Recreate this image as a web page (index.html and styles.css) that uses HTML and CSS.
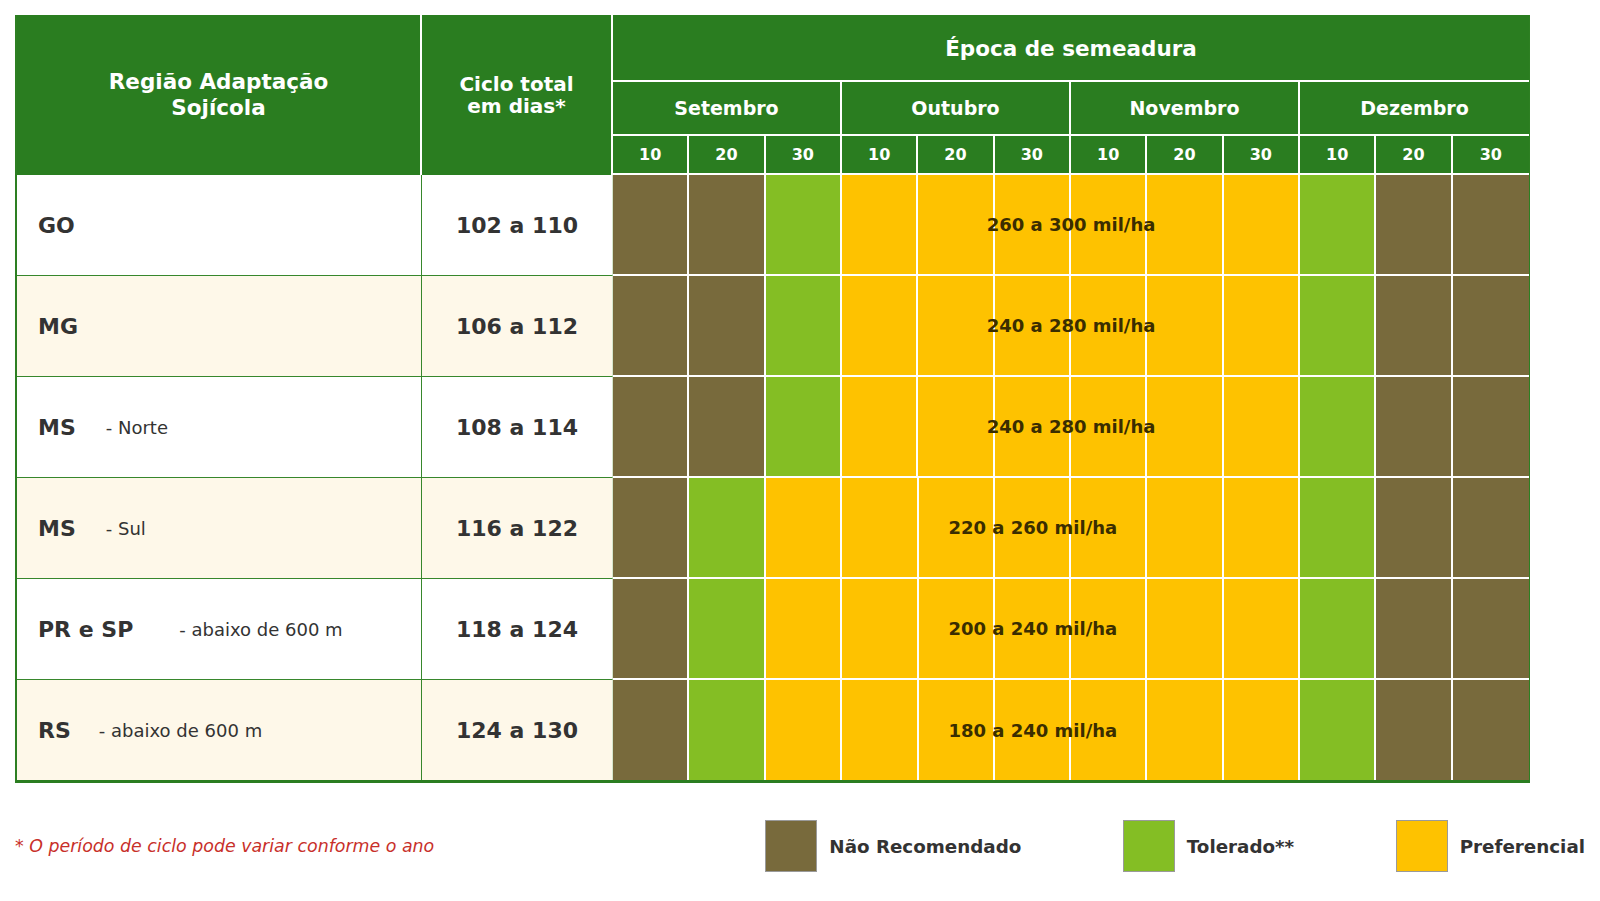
FILE: index.html
```html
<!DOCTYPE html>
<html lang="pt-BR">
<head>
<meta charset="utf-8">
<title>Época de semeadura</title>
<link rel="stylesheet" href="styles.css">
</head>
<body>
<div class="page">
  <div class="chart">
    <div class="grid head">
      <div class="h h-region">Região Adaptação<br>Sojícola</div>
      <div class="h h-cycle">Ciclo total<br>em dias*</div>
      <div class="h h-epoca end">Época de semeadura</div>
      <div class="h h-month">Setembro</div>
      <div class="h h-month">Outubro</div>
      <div class="h h-month">Novembro</div>
      <div class="h h-month end">Dezembro</div>
      <div class="h h-day">10</div><div class="h h-day">20</div><div class="h h-day">30</div>
      <div class="h h-day">10</div><div class="h h-day">20</div><div class="h h-day">30</div>
      <div class="h h-day">10</div><div class="h h-day">20</div><div class="h h-day">30</div>
      <div class="h h-day">10</div><div class="h h-day">20</div><div class="h h-day end">30</div>
    </div>

    <div class="grid row">
      <div class="region">GO</div>
      <div class="cycle">102 a 110</div>
      <div class="c b"></div><div class="c b"></div><div class="c g"></div>
      <div class="c y span6">260 a 300 mil/ha</div>
      <div class="c g"></div><div class="c b"></div><div class="c b end"></div>
    </div>

    <div class="grid row alt">
      <div class="region">MG</div>
      <div class="cycle">106 a 112</div>
      <div class="c b"></div><div class="c b"></div><div class="c g"></div>
      <div class="c y span6">240 a 280 mil/ha</div>
      <div class="c g"></div><div class="c b"></div><div class="c b end"></div>
    </div>

    <div class="grid row">
      <div class="region">MS<span class="sub">- Norte</span></div>
      <div class="cycle">108 a 114</div>
      <div class="c b"></div><div class="c b"></div><div class="c g"></div>
      <div class="c y span6">240 a 280 mil/ha</div>
      <div class="c g"></div><div class="c b"></div><div class="c b end"></div>
    </div>

    <div class="grid row alt">
      <div class="region">MS<span class="sub">- Sul</span></div>
      <div class="cycle">116 a 122</div>
      <div class="c b"></div><div class="c g"></div>
      <div class="c y span7">220 a 260 mil/ha</div>
      <div class="c g"></div><div class="c b"></div><div class="c b end"></div>
    </div>

    <div class="grid row">
      <div class="region">PR e SP<span class="sub wide">- abaixo de 600 m</span></div>
      <div class="cycle">118 a 124</div>
      <div class="c b"></div><div class="c g"></div>
      <div class="c y span7">200 a 240 mil/ha</div>
      <div class="c g"></div><div class="c b"></div><div class="c b end"></div>
    </div>

    <div class="grid row alt last">
      <div class="region">RS<span class="sub narrow">- abaixo de 600 m</span></div>
      <div class="cycle">124 a 130</div>
      <div class="c b"></div><div class="c g"></div>
      <div class="c y span7">180 a 240 mil/ha</div>
      <div class="c g"></div><div class="c b"></div><div class="c b end"></div>
    </div>
  </div>

  <div class="footer">
    <div class="note">* O período de ciclo pode variar conforme o ano</div>
    <div class="legend">
      <div class="item"><span class="sw b"></span>Não Recomendado</div>
      <div class="item"><span class="sw g"></span>Tolerado**</div>
      <div class="item"><span class="sw y"></span>Preferencial</div>
    </div>
  </div>
</div>
</body>
</html>
```

FILE: styles.css
```css
* { box-sizing: border-box; }

body {
  margin: 0;
  background: #ffffff;
  font-family: "DejaVu Sans", "Noto Sans", sans-serif;
  color: #333333;
}

.page {
  padding: 15px 15px 0 15px;
}

.chart {
  width: 1515px;
  border-left: 2px solid #2d7f22;
  border-right: 1px solid #2d7f22;
  border-bottom: 3px solid #2a7d20;
}

.grid {
  display: grid;
  grid-template-columns: 405px 191px repeat(12, 1fr);
}

/* ---------- header ---------- */
.head {
  grid-template-rows: 67px 54px 39px;
  background: #2a7d20;
  color: #ffffff;
  font-weight: bold;
}

.h {
  display: flex;
  align-items: center;
  justify-content: center;
  text-align: center;
  border-right: 2px solid #ffffff;
  border-bottom: 2px solid #ffffff;
}

.h.end { border-right: none; }

.h-region {
  grid-column: 1;
  grid-row: 1 / 4;
  font-size: 21.5px;
  line-height: 1.19;
  border-bottom: none;
}

.h-cycle {
  grid-column: 2;
  grid-row: 1 / 4;
  font-size: 20px;
  line-height: 1.12;
  border-bottom: none;
}

.h-epoca {
  grid-column: 3 / 15;
  grid-row: 1;
  font-size: 21.5px;
  padding-top: 2px;
}

.h-month {
  grid-column: span 3;
  font-size: 19px;
}

.h-day {
  font-size: 16px;
}

/* ---------- data rows ---------- */
.row {
  height: 101px;
}

.row.last {
  height: 100px;
}

.region,
.cycle {
  display: flex;
  align-items: center;
  background: #ffffff;
  font-weight: bold;
  font-size: 22px;
  color: #333333;
  border-bottom: 1px solid #37872c;
}

.alt .region,
.alt .cycle {
  background: #fef8e9;
}

.region {
  padding-left: 21px;
  border-right: 1px solid #37872c;
}

.cycle {
  justify-content: center;
  border-right: 1px solid #d6e6cc;
}

.sub {
  font-weight: normal;
  font-size: 18px;
  margin-left: 30px;
}

.sub.wide { margin-left: 46px; }
.sub.narrow { margin-left: 28px; }

.c {
  border-right: 2px solid #ffffff;
  border-bottom: 2px solid #ffffff;
}

.c.end { border-right: none; }

.last .region,
.last .cycle,
.last .c {
  border-bottom: none;
}

.b { background: #786a3c; }
.g { background: #84be24; }
.y { background: #fec200; }

.span6,
.span7 {
  display: flex;
  align-items: center;
  justify-content: center;
  border-right: none;
  font-weight: bold;
  font-size: 18px;
  color: #3a2d00;
}

.span6 {
  grid-column: span 6;
  background: repeating-linear-gradient(90deg,
    #fec200 0, #fec200 calc(100% / 6 - 2px),
    #ffffff calc(100% / 6 - 2px), #ffffff calc(100% / 6));
}

.span7 {
  grid-column: span 7;
  background: repeating-linear-gradient(90deg,
    #fec200 0, #fec200 calc(100% / 7 - 2px),
    #ffffff calc(100% / 7 - 2px), #ffffff calc(100% / 7));
}

/* ---------- footer ---------- */
.footer {
  width: 1570px;
  height: 52px;
  margin-top: 37px;
  display: flex;
  align-items: center;
  justify-content: space-between;
}

.note {
  color: #c8302a;
  font-style: italic;
  font-size: 17.4px;
}

.legend {
  display: flex;
  align-items: center;
  gap: 101.5px;
}

.item {
  display: flex;
  align-items: center;
  gap: 12px;
  font-weight: bold;
  font-size: 18.3px;
  color: #333333;
}

.sw {
  width: 52px;
  height: 52px;
  border: 1px solid #9a9a9a;
}
```
